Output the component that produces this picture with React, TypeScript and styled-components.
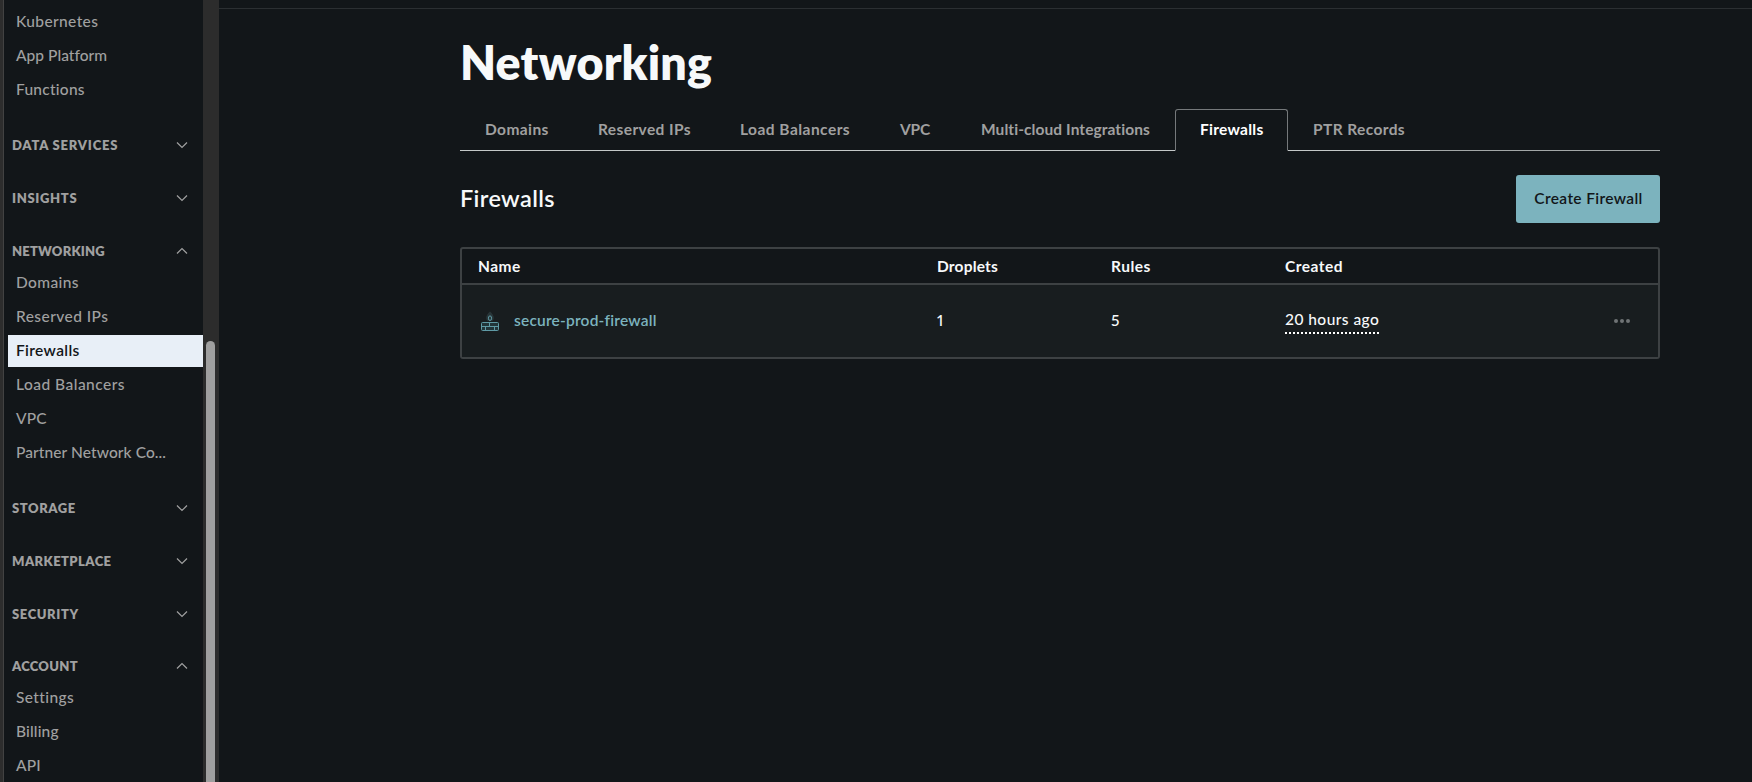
import React from 'react';
import styled, { createGlobalStyle, css } from 'styled-components';

const GlobalStyle = createGlobalStyle`
  * { box-sizing: border-box; }
  body {
    margin: 0;
    background: #121619;
    color: #f7f9fa;
    font: 500 15.5px/20px Lato, "Open Sans", sans-serif;
    overflow: hidden;
  }
`;

const tracked = css<{ $track?: number }>`
  letter-spacing: ${({ $track = 0 }) => $track}px;
`;

const Page = styled.div`
  display: flex;
  height: 782px;
  overflow: hidden;
`;

const Edge = styled.div`
  flex: none;
  width: 4px;
  background: #2d2d2d;
  border-right: 1px solid #424242;
`;

const Sidebar = styled.nav`
  flex: none;
  width: 199px;
  padding: 5px 0 0 4px;
`;

const ScrollTrack = styled.div`
  flex: none;
  width: 16px;
  padding: 341px 4px 0 3px;
  background: #2c2c2c;
`;

const ScrollThumb = styled.div`
  height: 460px;
  border-radius: 5px;
  background: #9f9f9f;
`;

const Group = styled.section`
  & + & { padding-top: 24px; }
`;

const GroupHeader = styled.div`
  display: flex;
  align-items: center;
  justify-content: space-between;
  height: 28.85px;
  padding: 0 15px 0 4px;
  color: #a0a0a0;
`;

const GroupName = styled.span<{ $track?: number }>`
  font-size: 13px;
  font-weight: 800;
  line-height: 16px;
  ${tracked}
`;

const NavItem = styled.div<{ $track?: number; $active?: boolean }>`
  height: 32px;
  margin-bottom: 2px;
  padding: 0 8px;
  line-height: 31px;
  color: #a0a0a0;
  white-space: nowrap;
  ${tracked}
  ${({ $active }) => $active && css`
    background: #e8eff7;
    color: #121619;
    font-weight: 600;
  `}
`;

const GroupItems = styled.div`
  padding-top: 1px;
  margin-bottom: -1px;
`;

const Main = styled.main`
  flex: 1;
  padding-top: 8px;
`;

const TopRule = styled.div`
  height: 1px;
  background: #2b2f32;
`;

const Content = styled.div`
  width: 1200px;
  margin: 0 0 0 241px;
`;

const Title = styled.h1`
  margin: 0;
  padding-top: 23px;
  font-size: 46.5px;
  font-weight: 800;
  line-height: 60px;
  height: 100px;
  ${tracked}
`;

const Tabs = styled.div`
  display: flex;
  height: 42px;
  &::after {
    content: "";
    flex: 1;
    border-bottom: 1px solid #a3a7a7;
  }
`;

const Tab = styled.div<{ $track?: number; $w: number; $active?: boolean }>`
  flex: none;
  width: ${({ $w }) => $w}px;
  padding: 0 0 0 25px;
  line-height: 41px;
  font-weight: 700;
  color: #a0a0a0;
  white-space: nowrap;
  border-bottom: 1px solid #c4c8c8;
  ${tracked}
  ${({ $active }) => $active && css`
    padding-left: 24px;
    line-height: 39px;
    color: #fff;
    border: 1px solid #75797b;
    border-bottom-color: transparent;
    border-radius: 3px 3px 0 0;
  `}
`;

const SectionBar = styled.div`
  display: flex;
  align-items: center;
  justify-content: space-between;
  height: 48px;
  margin: 24px 0;
`;

const SectionTitle = styled.h2<{ $track?: number }>`
  margin: 0;
  padding-bottom: 2px;
  font-size: 23.5px;
  font-weight: 600;
  line-height: 30px;
  ${tracked}
`;

const CreateButton = styled.button<{ $track?: number }>`
  width: 144px;
  height: 48px;
  padding: 0 0 2px 1px;
  border: 0;
  border-radius: 3px;
  background: #7cb3be;
  color: #121619;
  font: inherit;
  font-weight: 600;
  ${tracked}
`;

const Table = styled.div`
  border: 2px solid #3d4143;
  border-radius: 3px;
`;

const Row = styled.div`
  display: grid;
  grid-template-columns: 459px 174px 174px 1fr auto;
  align-items: center;
  padding: 0 28px 0 16px;
`;

const HeadRow = styled(Row)`
  height: 36px;
  border-bottom: 2px solid #3d4143;
  font-weight: 700;
`;

const BodyRow = styled(Row)`
  height: 72px;
  background: #181d1f;
`;

const Cell = styled.div<{ $track?: number }>`
  ${tracked}
`;

const Count = styled.div`
  padding-bottom: 2px;
  font-variant-numeric: proportional-nums;
`;

const NameCell = styled.div`
  display: flex;
  align-items: center;
  gap: 14px;
  padding-left: 2px;
`;

const FirewallLink = styled.a<{ $track?: number }>`
  padding-bottom: 2px;
  color: #7cb3be;
  font-weight: 600;
  ${tracked}
`;

const Age = styled.span<{ $track?: number }>`
  display: block;
  width: 94px;
  height: 26px;
  padding-top: 1px;
  white-space: nowrap;
  border-bottom: 2px dotted #fff;
  ${tracked}
`;

const Dots = styled.div`
  display: flex;
  gap: 2px;
`;

const Dot = styled.i`
  width: 4px;
  height: 4px;
  border-radius: 50%;
  background: #6f7375;
`;

const Chevron = ({ open }: { open?: boolean }) => (
  <svg width="12" height="8" viewBox="0 0 12 8" fill="none" stroke="#a0a0a0" strokeWidth="1.2">
    <path d={open ? 'M1 6.5 6 1.5 11 6.5' : 'M1 1.5 6 6.5 11 1.5'} />
  </svg>
);

const FirewallIcon = () => (
  <svg width="20" height="22" viewBox="0 0 20 22" fill="none" stroke="#5f9aa5">
    <path d="M10 1.500C7.600 3.700 6.200 5.700 6.200 7.900c0 1.500.8 2.600 2 3.200h3.600c1.200-.6 2-1.700 2-3.200C13.800 5.700 12.400 3.700 10 1.500Z" fill="#283538" stroke="none" />
    <ellipse cx="10" cy="8.200" rx="1.600" ry="2.300" />
    <rect x="1.500" y="12.500" width="17" height="8" rx="1" fill="#223539" />
    <path d="M1.500 16.500h17M9.500 12.500v4M5.500 16.500v4M14.500 16.500v4" />
  </svg>
);

type Item = [label: string, track: number];
interface NavGroup { name?: string; track?: number; items?: Item[] }

const nav: NavGroup[] = [
  { items: [['Kubernetes', 0.37], ['App Platform', 0.04], ['Functions', 0.25]] },
  { name: 'DATA SERVICES', track: 0.78 },
  { name: 'INSIGHTS', track: 0.66 },
  {
    name: 'NETWORKING', track: 0.2,
    items: [['Domains', 0.38], ['Reserved IPs', 0.44], ['Firewalls', 0.35], ['Load Balancers', 0.48], ['VPC', 0.2], ['Partner Network Co...', 0.09]],
  },
  { name: 'STORAGE', track: 0.56 },
  { name: 'MARKETPLACE', track: 0.42 },
  { name: 'SECURITY', track: 0.6 },
  { name: 'ACCOUNT', track: 0.28, items: [['Settings', 0.39], ['Billing', 0.15], ['API', 0.15]] },
];

const tabs: [label: string, width: number, track: number][] = [
  ['Domains', 113, 0.4],
  ['Reserved IPs', 142, 0.4],
  ['Load Balancers', 160, 0.47],
  ['VPC', 81, -0.2],
  ['Multi-cloud Integrations', 219, 0.08],
  ['Firewalls', 113, 0.26],
  ['PTR Records', 142, 0.39],
];

export default function App() {
  return (
    <>
      <GlobalStyle />
      <Page>
        <Edge />
        <Sidebar>
          {nav.map((group, i) => (
            <Group key={i}>
              {group.name && (
                <GroupHeader>
                  <GroupName $track={group.track}>{group.name}</GroupName>
                  <Chevron open={!!group.items} />
                </GroupHeader>
              )}
              {group.items && (
                <GroupItems>
                  {group.items.map(([label, track]) => (
                    <NavItem key={label} $track={track} $active={label === 'Firewalls'}>{label}</NavItem>
                  ))}
                </GroupItems>
              )}
            </Group>
          ))}
        </Sidebar>
        <ScrollTrack><ScrollThumb /></ScrollTrack>
        <Main>
          <TopRule />
          <Content>
            <Title $track={0.2}>Networking</Title>
            <Tabs>
              {tabs.map(([label, width, track]) => (
                <Tab key={label} $w={width} $track={track} $active={label === 'Firewalls'}>{label}</Tab>
              ))}
            </Tabs>
            <SectionBar>
              <SectionTitle $track={0.36}>Firewalls</SectionTitle>
              <CreateButton $track={0.35}>Create Firewall</CreateButton>
            </SectionBar>
            <Table>
              <HeadRow>
                <Cell $track={0.5}>Name</Cell>
                <Cell $track={0.18}>Droplets</Cell>
                <Cell $track={0.5}>Rules</Cell>
                <Cell $track={0.5}>Created</Cell>
              </HeadRow>
              <BodyRow>
                <NameCell>
                  <FirewallIcon />
                  <FirewallLink $track={0.2}>secure-prod-firewall</FirewallLink>
                </NameCell>
                <Count>1</Count>
                <Count>5</Count>
                <Cell><Age $track={0.45}>20 hours ago</Age></Cell>
                <Dots><Dot /><Dot /><Dot /></Dots>
              </BodyRow>
            </Table>
          </Content>
        </Main>
      </Page>
    </>
  );
}
